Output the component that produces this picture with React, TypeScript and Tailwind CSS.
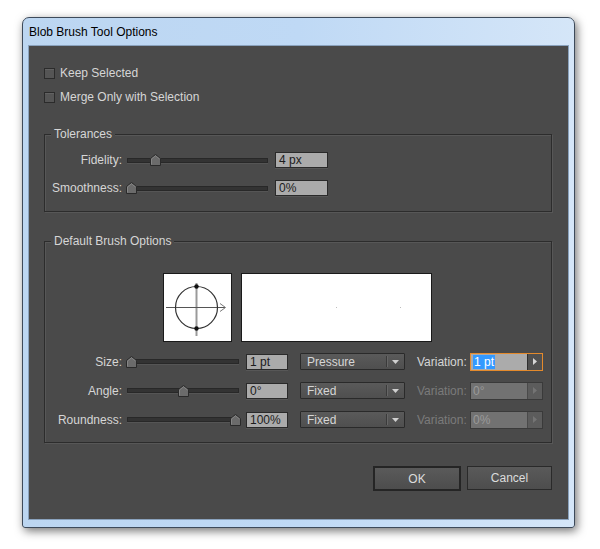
import React from "react";

const font = { fontFamily: '"Liberation Sans", Arial, sans-serif' };

const Checkbox: React.FC<{ label: string }> = ({ label }) => (
  <div className="flex h-[14px] items-center gap-[5px]">
    <div className="size-[11px] border border-[#2b2b2b] bg-[#555555] shadow-[inset_0_1px_0_#626262]" />
    <span className="text-[12px] text-[#d6d6d6]">{label}</span>
  </div>
);

const Slider: React.FC<{ width: number; thumb: number }> = ({ width, thumb }) => (
  <div className="relative flex h-[16px] items-center" style={{ width }}>
    <div className="h-[5px] w-full border border-[#282828] bg-[#333333] shadow-[0_1px_0_#555555]" />
    <svg
      className="absolute top-[2px]"
      style={{ left: thumb - 5 }}
      width="11"
      height="12"
      viewBox="0 0 11 12"
    >
      <path d="M0.5 11.5 V4.5 L5.5 0.5 L10.5 4.5 V11.5 Z" fill="#6b6b6b" stroke="#2a2a2a" />
      <path d="M1.5 10.5 V5 L5.5 1.8 L9.5 5" fill="none" stroke="#858585" />
    </svg>
  </div>
);

const Input: React.FC<{ value: string; width: number }> = ({ value, width }) => (
  <div
    className="flex h-[16px] items-center border border-[#2a2a2a] bg-[#ababab] pl-[3px] text-[12px] text-[#1c1c1c] shadow-[0_1px_0_#575757]"
    style={{ width }}
  >
    {value}
  </div>
);

const Dropdown: React.FC<{ value: string }> = ({ value }) => (
  <div className="flex h-[17px] w-[105px] items-center rounded-[1px] border border-[#2a2a2a] bg-gradient-to-b from-[#5a5a5a] to-[#4f4f4f] text-[12px] text-[#d6d6d6]">
    <span className="flex-1 pl-[6px]">{value}</span>
    <div className="h-[11px] w-px bg-[#3a3a3a] shadow-[1px_0_0_#666666]" />
    <div className="flex w-[17px] items-center justify-center">
      <svg width="7" height="4" viewBox="0 0 7 4">
        <path d="M0 0 H7 L3.5 4 Z" fill="#d0d0d0" />
      </svg>
    </div>
  </div>
);

const Variation: React.FC<{ value: string; active?: boolean }> = ({ value, active }) => (
  <div className="flex items-center">
    <span className={active ? "w-[53px] text-[12px] text-[#d6d6d6]" : "w-[53px] text-[12px] text-[#7b7b7b]"}>
      Variation:
    </span>
    <div
      className={
        active
          ? "flex h-[18px] w-[73px] border border-[#e48a2c] bg-[#ababab]"
          : "flex h-[18px] w-[73px] border border-[#3a3a3a] bg-[#727272]"
      }
    >
      <div className="flex flex-1 items-center pl-[2px] text-[12px]">
        {active ? (
          <span className="bg-[#3399ff] px-px leading-[14px] text-white">{value}</span>
        ) : (
          <span className="text-[#9a9a9a]">{value}</span>
        )}
      </div>
      <div
        className={
          active
            ? "flex w-[15px] items-center justify-center border-l border-[#2f2f2f] bg-[#505050]"
            : "flex w-[15px] items-center justify-center border-l border-[#4a4a4a] bg-[#5c5c5c]"
        }
      >
        <svg width="4" height="7" viewBox="0 0 4 7">
          <path d="M0 0 L4 3.5 L0 7 Z" fill={active ? "#d6d6d6" : "#747474"} />
        </svg>
      </div>
    </div>
  </div>
);

const Group: React.FC<{ title: string; height: number; children: React.ReactNode }> = ({
  title,
  height,
  children,
}) => (
  <div
    className="relative ml-[15px] mr-[16px] border border-[#2c2c2c] shadow-[1px_1px_0_#575757,inset_1px_1px_0_#575757]"
    style={{ height }}
  >
    <span className="absolute -top-[9px] left-[6px] bg-[#4a4a4a] px-[3px] text-[12px] leading-[16px] text-[#d6d6d6]">
      {title}
    </span>
    {children}
  </div>
);

const BrushRow: React.FC<{
  label: string;
  thumb: number;
  value: string;
  mode: string;
  variation: string;
  active?: boolean;
}> = ({ label, thumb, value, mode, variation, active }) => (
  <div className="flex h-[17px] items-center">
    <span className="w-[82px] pr-[5px] text-right text-[12px] text-[#d6d6d6]">{label}</span>
    <Slider width={112} thumb={thumb} />
    <div className="ml-[7px]">
      <Input value={value} width={42} />
    </div>
    <div className="ml-[12px]">
      <Dropdown value={mode} />
    </div>
    <div className="ml-[12px]">
      <Variation value={variation} active={active} />
    </div>
  </div>
);

const BrushTip = () => (
  <div className="h-[69px] w-[69px] border border-[#1a1a1a] bg-white">
    <svg width="67" height="67" viewBox="0 0 67 67">
      <line x1="32.5" y1="9" x2="32.5" y2="62" stroke="#9a9a9a" strokeWidth="2" />
      <line x1="2" y1="33.5" x2="61" y2="33.5" stroke="#555555" strokeWidth="1" />
      <path d="M56 29.5 L61.5 33.5 L56 37.5" fill="none" stroke="#777777" strokeWidth="1" />
      <circle cx="32.5" cy="33.5" r="21" fill="none" stroke="#333333" strokeWidth="1.2" />
      <circle cx="32.5" cy="12.5" r="2.2" fill="#111111" />
      <circle cx="32.5" cy="54.5" r="2.2" fill="#111111" />
    </svg>
  </div>
);

export default function App() {
  return (
    <div className="h-[549px] w-[600px] bg-white pl-[22px] pt-[17px]" style={font}>
      <div className="flex h-[511px] w-[553px] flex-col rounded-t-[7px] rounded-b-[3px] border border-[#3d4a5a] bg-gradient-to-r from-[#bcd6f1] via-[#bfd9f5] to-[#d5e6f8] shadow-[2px_3px_10px_rgba(0,0,0,0.55)]">
        {/* title bar */}
        <div className="flex h-[27px] shrink-0 items-center pl-[6px] text-[12px] text-black">
          Blob Brush Tool Options
        </div>
        <div className="mx-[5px] mb-[7px] flex-1 border border-[#8aa2bd] bg-[#4a4a4a]">
          <div className="flex flex-col gap-[10px] pl-[15px] pt-[20px]">
            <Checkbox label="Keep Selected" />
            <Checkbox label="Merge Only with Selection" />
          </div>

          <div className="mt-[30px]">
            <Group title="Tolerances" height={78}>
              <div className="flex flex-col gap-[12px] pt-[17px]">
                <div className="flex h-[16px] items-center">
                  <span className="w-[82px] pr-[5px] text-right text-[12px] text-[#d6d6d6]">Fidelity:</span>
                  <Slider width={141} thumb={28} />
                  <div className="ml-[7px]">
                    <Input value="4 px" width={53} />
                  </div>
                </div>
                <div className="flex h-[16px] items-center">
                  <span className="w-[82px] pr-[5px] text-right text-[12px] text-[#d6d6d6]">Smoothness:</span>
                  <Slider width={141} thumb={4} />
                  <div className="ml-[7px]">
                    <Input value="0%" width={53} />
                  </div>
                </div>
              </div>
            </Group>
          </div>

          <div className="mt-[29px]">
            <Group title="Default Brush Options" height={202}>
              <div className="flex gap-[9px] pl-[118px] pt-[31px]">
                <BrushTip />
                <div className="relative h-[69px] w-[191px] border border-[#1a1a1a] bg-white">
                  <span className="absolute left-[94px] top-[33px] size-px bg-[#bdbdbd]" />
                  <span className="absolute left-[158px] top-[33px] size-px bg-[#bdbdbd]" />
                </div>
              </div>
              <div className="mt-[11px] flex flex-col gap-[12px]">
                <BrushRow label="Size:" thumb={4} value="1 pt" mode="Pressure" variation="1 pt" active />
                <BrushRow label="Angle:" thumb={56} value="0°" mode="Fixed" variation="0°" />
                <BrushRow label="Roundness:" thumb={108} value="100%" mode="Fixed" variation="0%" />
              </div>
            </Group>
          </div>

          <div className="mr-[16px] mt-[23px] flex justify-end gap-[6px]">
            <button className="h-[25px] w-[88px] border-2 border-[#252525] bg-gradient-to-b from-[#5a5a5a] to-[#4d4d4d] text-[12px] text-[#dcdcdc]">
              OK
            </button>
            <button className="h-[24px] w-[85px] border border-[#2a2a2a] bg-gradient-to-b from-[#5a5a5a] to-[#4d4d4d] text-[12px] text-[#dcdcdc]">
              Cancel
            </button>
          </div>
        </div>
      </div>
    </div>
  );
}
